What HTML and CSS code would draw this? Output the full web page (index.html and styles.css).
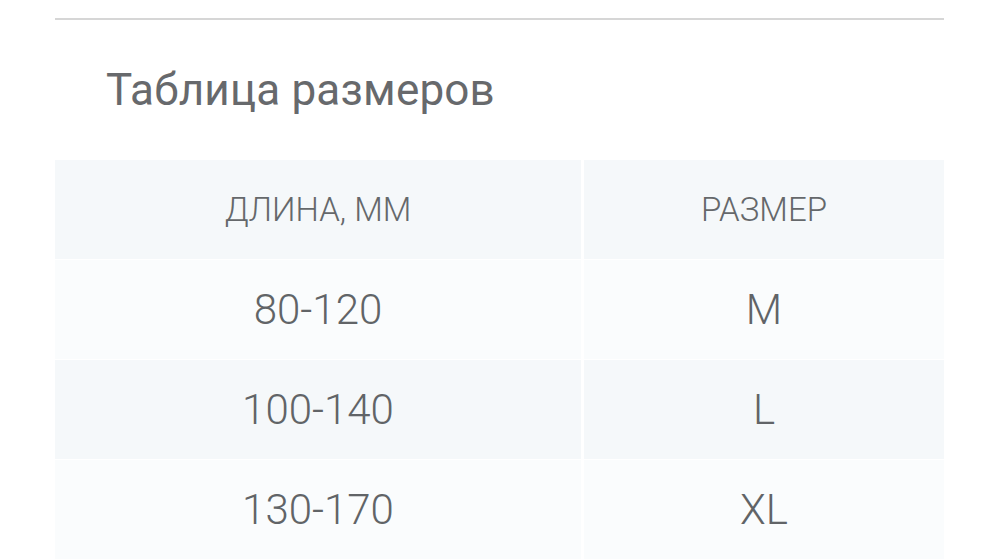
FILE: index.html
```html
<!DOCTYPE html>
<html lang="ru">
<head>
<meta charset="utf-8">
<title>Таблица размеров</title>
<link rel="stylesheet" href="styles.css">
</head>
<body>
<div class="page">
  <div class="rule"></div>
  <h2 class="title">Таблица размеров</h2>
  <div class="table">
    <div class="cell head odd">ДЛИНА, ММ</div>
    <div class="cell head odd">РАЗМЕР</div>
    <div class="cell even">80-120</div>
    <div class="cell even">M</div>
    <div class="cell odd">100-140</div>
    <div class="cell odd">L</div>
    <div class="cell even">130-170</div>
    <div class="cell even">XL</div>
  </div>
</div>
</body>
</html>
```
FILE: styles.css
```css
html, body {
  margin: 0;
  padding: 0;
  background: #ffffff;
}
.page {
  width: 889px;
  margin-left: 55px;
  padding-top: 18px;
  font-family: Roboto, "Liberation Sans", sans-serif;
  color: #666a6d;
}
.rule {
  height: 2px;
  background: #d6d6d6;
}
.title {
  margin: 0;
  height: 140px;
  display: flex;
  align-items: center;
  padding-left: 51px;
  box-sizing: border-box;
  font-size: 44px;
  font-weight: 400;
  color: #67696c;
  letter-spacing: 0.2px;
}
.table {
  display: grid;
  grid-template-columns: 526px 1fr;
  grid-auto-rows: 99px;
  column-gap: 3px;
  row-gap: 1px;
}
.cell {
  display: flex;
  align-items: center;
  justify-content: center;
  font-weight: 300;
  font-size: 42px;
  color: #616467;
}
.cell.head {
  font-size: 33px;
  color: #65686b;
}
.odd {
  background: #f5f8fa;
}
.even {
  background: #fafcfd;
}
```
